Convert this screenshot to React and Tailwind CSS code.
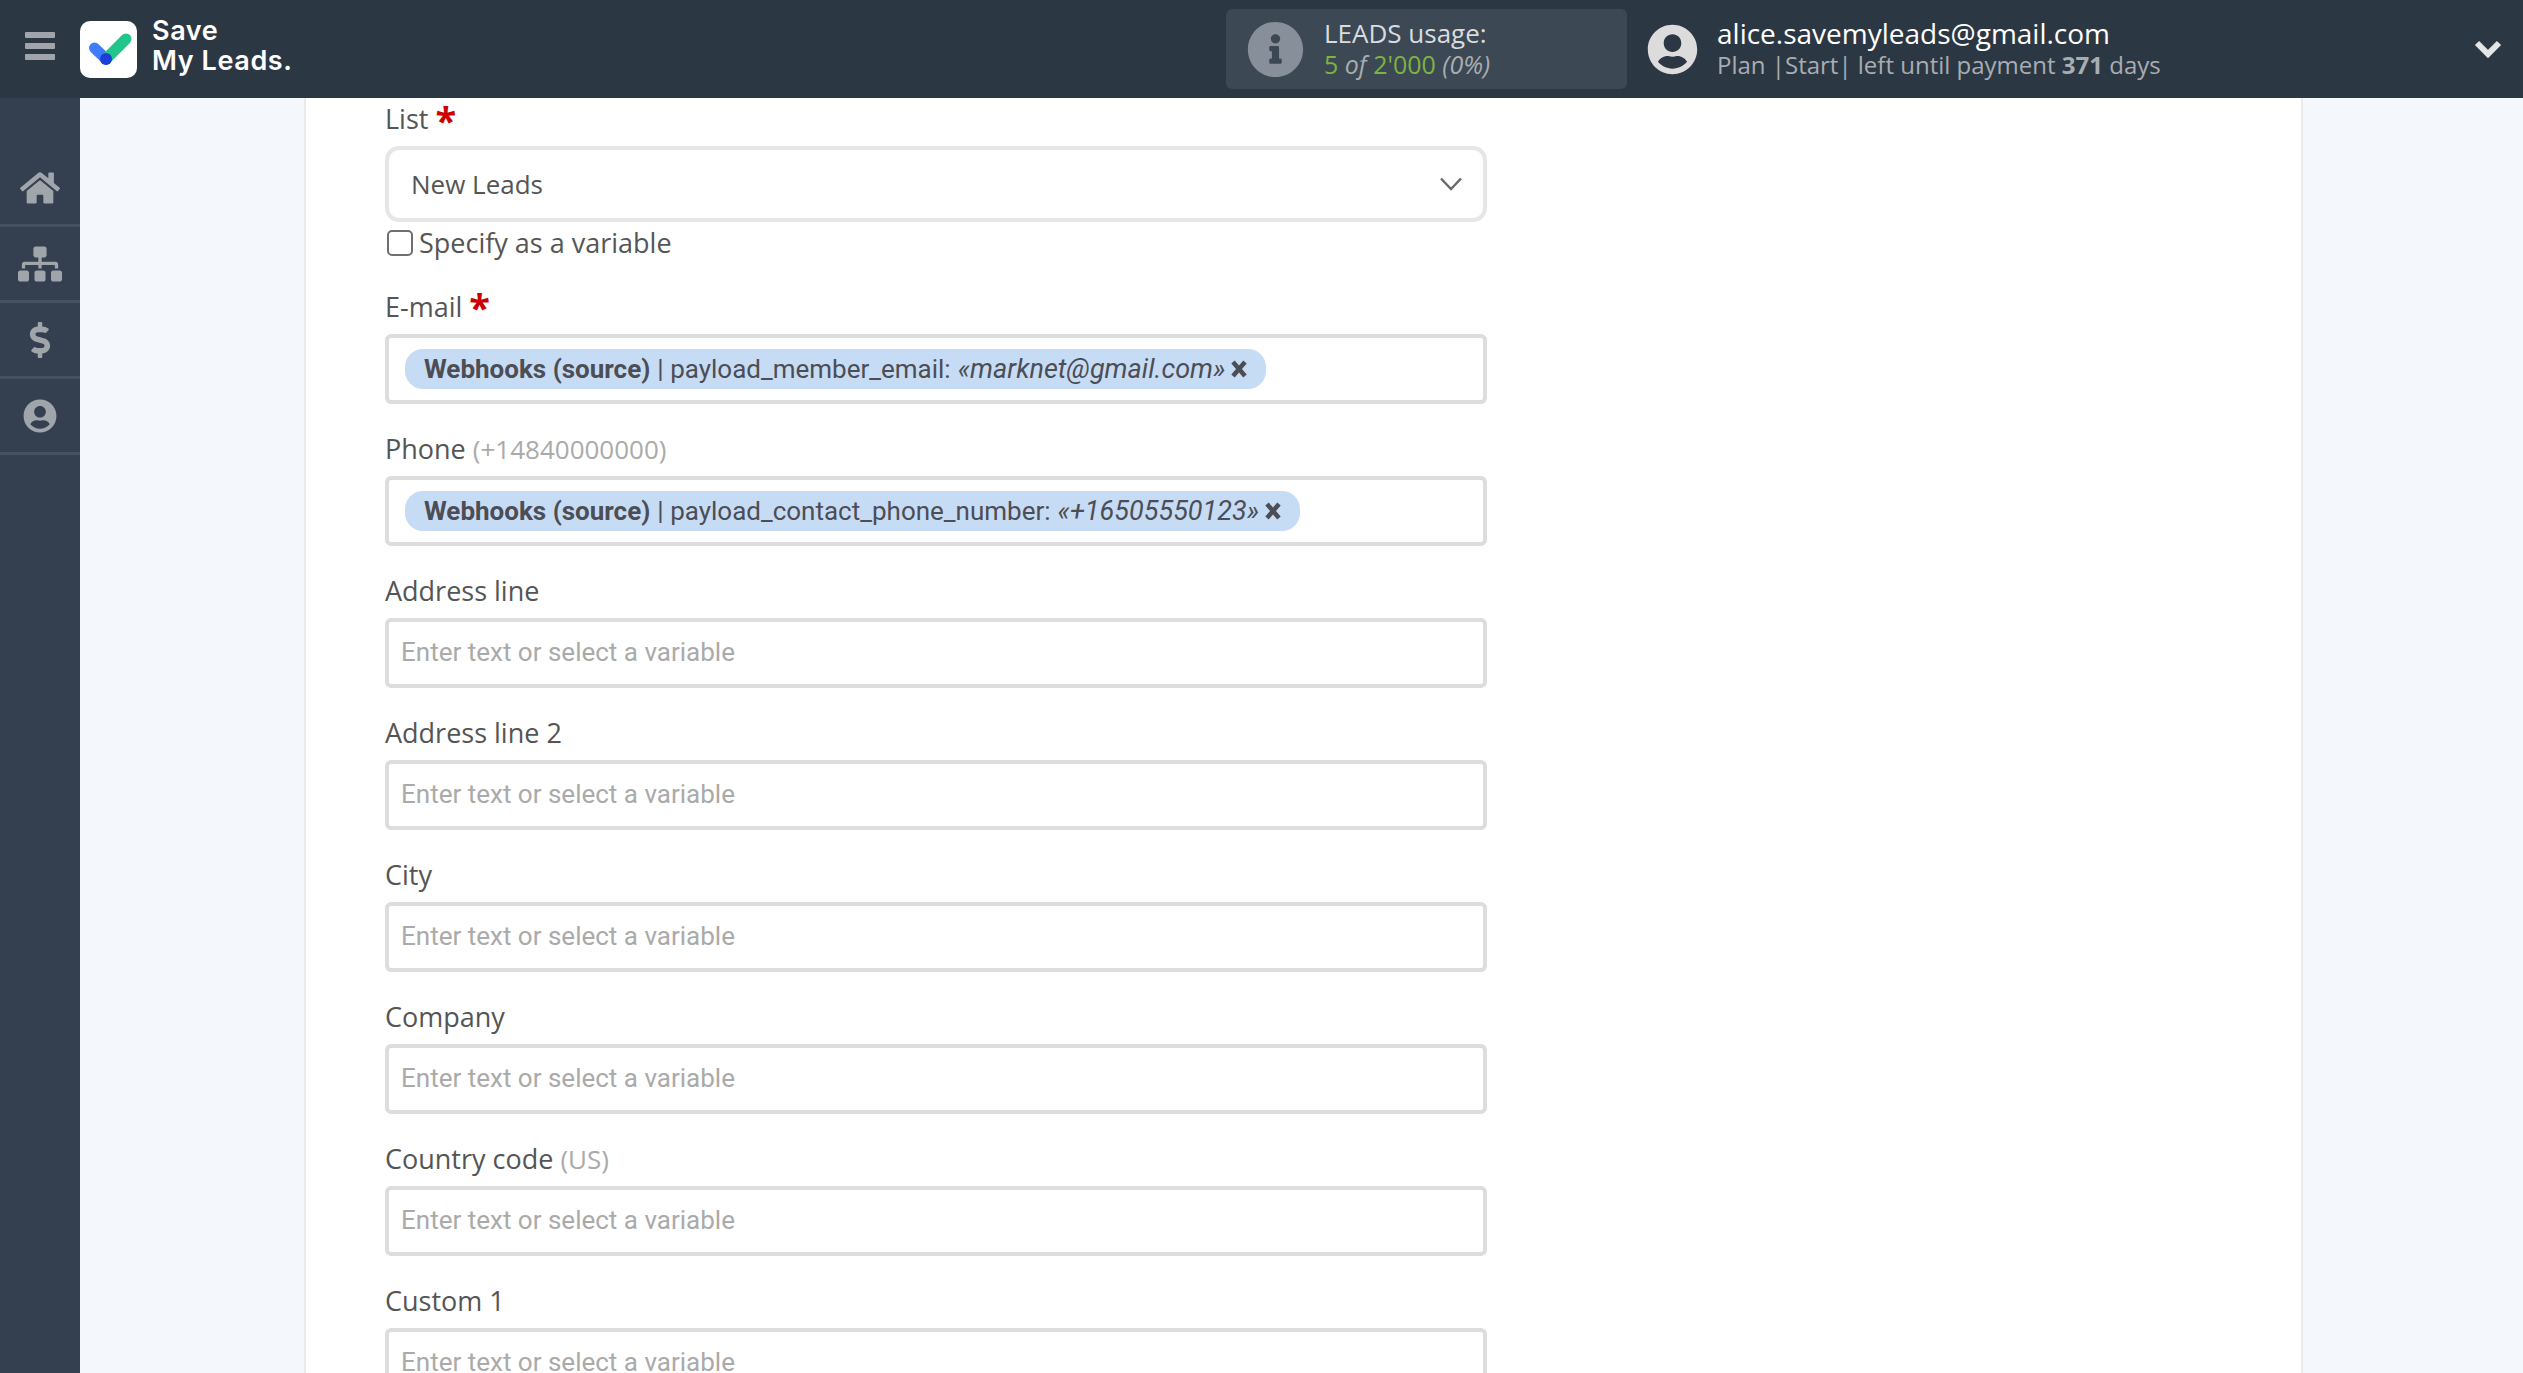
import React from 'react';
import { FaHome, FaSitemap, FaDollarSign, FaUserCircle, FaInfoCircle } from 'react-icons/fa';

const plainFields = [
  { label: 'Address line' },
  { label: 'Address line 2' },
  { label: 'City' },
  { label: 'Company' },
  { label: 'Country code', hint: '(US)' },
  { label: 'Custom 1' },
];

const Logo = () => (
  <div className="w-[57px] h-[57px] bg-white rounded-[10px] flex items-center justify-center shrink-0">
    <svg width="57" height="57" viewBox="0 0 57 57">
      <line x1="14.5" y1="27" x2="26" y2="38" stroke="#3f7dfb" strokeWidth="11" strokeLinecap="round" />
      <line x1="26" y1="38" x2="46" y2="18" stroke="#20c68b" strokeWidth="11" strokeLinecap="round" />
      <circle cx="26" cy="38" r="6" fill="#1c3fd6" />
    </svg>
  </div>
);

const Chip = ({ field, value }) => (
  <div className="inline-flex items-center h-[40px] rounded-[18px] bg-[#c6dcf5] pl-[19px] pr-[19px] text-[26px] text-[#4d4d55] font-['Roboto',sans-serif] whitespace-nowrap">
    <b className="font-bold">Webhooks (source)</b>
    <span className="ml-[7px]">| {field}: </span>
    <i className="ml-[7px] text-[27px]">«{value}»</i>
    <svg className="ml-[6px]" width="16" height="18" viewBox="0 0 16 18" fill="none" stroke="#4d4d55" strokeWidth="4.5">
      <path d="M2 2 L14 16 M14 2 L2 16" />
    </svg>
  </div>
);

const Star = () => (
  <span className="ml-[7px] text-[38px] leading-none font-bold text-[#cc0000]">*</span>
);

const Label = ({ children, hint, required }) => (
  <div className="h-[72px] flex items-center pt-[18px] text-[27px] text-[#555555] font-medium">
    <span>{children}</span>
    {hint && <span className="ml-[7px] text-[26px] text-[#aaaaaa] font-normal">{hint}</span>}
    {required && <Star />}
  </div>
);

const BoxField = ({ label, hint, required, children }) => (
  <div>
    <Label hint={hint} required={required}>{label}</Label>
    <div className="h-[70px] w-[1102px] border-[4px] border-[#dddddd] rounded-[6px] bg-white flex items-center">
      {children}
    </div>
  </div>
);

const NavItem = ({ children }) => (
  <div className="h-[76px] border-b-[3px] border-[#465160] flex items-center justify-center text-[#a0a5ab]">
    {children}
  </div>
);

const App = () => {
  return (
    <div className="w-full h-screen overflow-hidden flex flex-col font-['Open_Sans',sans-serif]">
      <header className="h-[98px] shrink-0 bg-[#2c3744] flex items-center">
        <div className="w-[80px] flex flex-col items-center gap-[5px] pb-[6px]">
          <span className="w-[30px] h-[6px] rounded-[1px] bg-[#a1a5ab]" />
          <span className="w-[30px] h-[6px] rounded-[1px] bg-[#a1a5ab]" />
          <span className="w-[30px] h-[6px] rounded-[1px] bg-[#a1a5ab]" />
        </div>
        <Logo />
        <div className="ml-[15px] w-[150px] pb-[6px] text-white font-['Inter',sans-serif] font-semibold text-[27px] leading-[30px] tracking-[0.6px]">
          <div>Save</div>
          <div>My Leads.</div>
        </div>
        <div className="ml-[924px] w-[401px] h-[80px] rounded-[6px] bg-[#3c4853] flex items-center shrink-0">
          <FaInfoCircle className="ml-[21px] w-[57px] h-[57px] text-[#87909a]" />
          <div className="ml-[20px] pb-[2px]">
            <div className="text-[26px] leading-[32px] text-[#d9dcdf]">LEADS usage:</div>
            <div className="text-[25px] leading-[31px] italic text-[#a8adb2]">
              <span className="not-italic text-[#7cb342]">5</span> of <span className="not-italic text-[#7cb342]">2'000</span> (0%)
            </div>
          </div>
        </div>
        <FaUserCircle className="ml-[20px] w-[51px] h-[51px] text-[#dcdcdc] shrink-0" />
        <div className="ml-[19px] pb-[2px]">
          <div className="text-white text-[28px] leading-[34px]">alice.savemyleads@gmail.com</div>
          <div className="text-[#a8adb2] text-[24px] leading-[30px]">
            Plan |Start| left until payment <b className="font-bold">371</b> days
          </div>
        </div>
        <svg className="ml-auto mr-[21px]" width="28" height="18" viewBox="0 0 28 18" fill="none" stroke="#e3e5e7" strokeWidth="6">
          <path d="M3 3 L14 14 L25 3" />
        </svg>
      </header>

      <div className="flex-1 flex min-h-0">
        <aside className="w-[80px] shrink-0 bg-[#343f4f] pt-[53px]">
          <NavItem><FaHome className="w-[40px] h-[36px]" /></NavItem>
          <NavItem><FaSitemap className="w-[44px] h-[36px]" /></NavItem>
          <NavItem><FaDollarSign className="w-[24px] h-[36px]" /></NavItem>
          <NavItem><FaUserCircle className="w-[34px] h-[34px]" /></NavItem>
        </aside>

        <main className="flex-1 min-w-0 bg-[#f4f7fc] pl-[224px] pr-[220px]">
          <div className="h-full bg-white border-x-[2px] border-[#e9ebee] pl-[79px]">
            <div className="h-[48px] pb-[5px] flex items-center text-[27px] text-[#555555] font-medium">
              <span>List</span>
              <Star />
            </div>
            <div className="h-[76px] w-[1102px] border-[4px] border-[#e6e6e6] rounded-[14px] bg-white flex items-center justify-between pl-[22px] pr-[21px] text-[26px] text-[#555555]">
              <span>New Leads</span>
              <svg width="22" height="14" viewBox="0 0 22 14" fill="none" stroke="#6b6b6b" strokeWidth="2.5">
                <path d="M1 1.5 L11 12 L21 1.5" />
              </svg>
            </div>
            <div className="h-[40px] pt-[3px] flex items-center text-[27px] text-[#555555] font-medium">
              <span className="ml-[2px] w-[26px] h-[26px] -translate-y-[1px] border-[2px] border-[#6f6f6f] rounded-[5px] bg-white" />
              <span className="ml-[6px]">Specify as a variable</span>
            </div>
            <BoxField label="E-mail" required>
              <div className="pl-[16px]"><Chip field="payload_member_email" value="marknet@gmail.com" /></div>
            </BoxField>
            <BoxField label="Phone" hint="(+14840000000)">
              <div className="pl-[16px]"><Chip field="payload_contact_phone_number" value="+16505550123" /></div>
            </BoxField>
            {plainFields.map((f) => (
              <BoxField key={f.label} label={f.label} hint={f.hint}>
                <span className="pl-[12px] pb-[1px] text-[26px] text-[#aaaaaa] font-['Roboto',sans-serif]">Enter text or select a variable</span>
              </BoxField>
            ))}
          </div>
        </main>
      </div>
    </div>
  );
};

export default App;
